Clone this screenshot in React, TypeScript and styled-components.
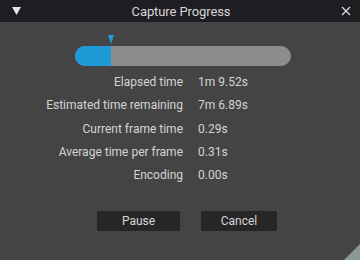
import React from "react";
import styled, { createGlobalStyle } from "styled-components";

const Global = createGlobalStyle`
  html, body { margin: 0; padding: 0; background: #444444; }
  body { font-family: Roboto, "Liberation Sans", sans-serif; }
  * { box-sizing: border-box; }
`;

const Window = styled.div`
  position: relative;
  width: 360px;
  height: 260px;
  background: #444444;
  display: flex;
  flex-direction: column;
  overflow: hidden;
`;

const TitleBar = styled.div`
  height: 22px;
  background: #1e1d22;
  display: flex;
  align-items: center;
  justify-content: space-between;
  padding: 0 9px 0 11px;
`;

const Title = styled.div`
  color: #d6d6d6;
  font-size: 13px;
  letter-spacing: -0.1px;
`;

const IconSlot = styled.div`
  width: 10px;
  height: 10px;
  display: flex;
  align-items: center;
  justify-content: center;
`;

const Body = styled.div`
  flex: 1;
  display: flex;
  flex-direction: column;
  align-items: stretch;
  padding-top: 13px;
`;

const BarWrap = styled.div`
  position: relative;
  margin: 0 69px 0 75px;
  padding-top: 11px;
`;

const Marker = styled.svg`
  position: absolute;
  top: 0;
  margin-left: -3px;
`;

const Track = styled.div`
  height: 20px;
  border-radius: 10px;
  background: #8d8d8d;
  overflow: hidden;
`;

const Fill = styled.div`
  height: 100%;
  background: #1e9bd7;
`;

const Stats = styled.div`
  display: grid;
  grid-template-columns: 183px 1fr;
  column-gap: 15px;
  margin-top: 5px;
`;

const Label = styled.div`
  color: #d4d4d4;
  font-size: 12px;
  text-align: right;
  height: 23.3px;
  line-height: 23.3px;
`;

const Value = styled(Label)`
  text-align: left;
`;

const Buttons = styled.div`
  display: flex;
  gap: 21px;
  margin: 24px 0 0 97px;
`;

const Button = styled.button<{ $w: number }>`
  width: ${(p) => p.$w}px;
  height: 20px;
  background: #262626;
  border: none;
  border-radius: 2px;
  color: #d6d6d6;
  font-family: Roboto, "Liberation Sans", sans-serif;
  font-size: 12px;
  padding: 0;
`;

const Grip = styled.svg`
  position: absolute;
  right: 0;
  bottom: 0;
`;

const rows: [string, string][] = [
  ["Elapsed time", "1m 9.52s"],
  ["Estimated time remaining", "7m 6.89s"],
  ["Current frame time", "0.29s"],
  ["Average time per frame", "0.31s"],
  ["Encoding", "0.00s"],
];

export default function App() {
  const progress = 36 / 216;
  return (
    <>
      <Global />
      <Window>
        <TitleBar>
          <IconSlot>
            <svg width="9" height="8" viewBox="0 0 9 8">
              <path d="M0 0 H9 L4.5 8 Z" fill="#e6e6e6" />
            </svg>
          </IconSlot>
          <Title>Capture Progress</Title>
          <IconSlot>
            <svg width="10" height="10" viewBox="0 0 10 10">
              <path d="M1 1 L9 9 M9 1 L1 9" stroke="#d8d8d8" strokeWidth="1.4" />
            </svg>
          </IconSlot>
        </TitleBar>
        <Body>
          <BarWrap>
            <Marker
              width="6"
              height="9"
              viewBox="0 0 6 9"
              style={{ left: `${progress * 100}%` }}
            >
              <path d="M0 0 H6 L3 9 Z" fill="#1e9bd7" />
            </Marker>
            <Track>
              <Fill style={{ width: `${progress * 100}%` }} />
            </Track>
          </BarWrap>
          <Stats>
            {rows.map(([l, v]) => (
              <React.Fragment key={l}>
                <Label>{l}</Label>
                <Value>{v}</Value>
              </React.Fragment>
            ))}
          </Stats>
          <Buttons>
            <Button $w={83}>Pause</Button>
            <Button $w={76}>Cancel</Button>
          </Buttons>
        </Body>
        <Grip width="16" height="16" viewBox="0 0 16 16">
          <path d="M16 0 V16 H0 Z" fill="#8a9898" />
        </Grip>
      </Window>
    </>
  );
}
